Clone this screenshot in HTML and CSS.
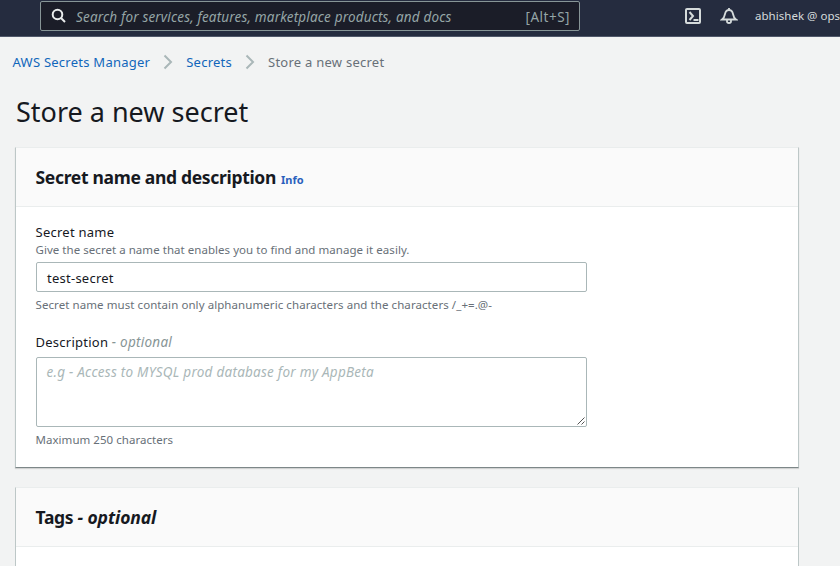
FILE: index.html
```html
<!DOCTYPE html>
<html lang="en"><head><meta charset="utf-8"><title>Store a new secret</title><link rel="stylesheet" href="styles.css"></head>
<body>
<header class="topbar">
<div class="search"><svg class="search-icon" width="16" height="16" viewBox="0 0 16 16"><circle cx="6.5" cy="6.5" r="4.8"/><path d="M10 10l4 4"/></svg><span class="hint">Search for services, features, marketplace products, and docs</span><span class="key">[Alt+S]</span></div>
<svg class="shell" width="18" height="18" viewBox="0 0 18 18"><rect x="2" y="2" width="14" height="14" rx="1"/><path d="M5.500 5l3.500 4-3.500 4M9.500 13h5"/></svg>
<svg class="bell" width="18" height="18" viewBox="0 0 18 18"><path d="M9 1v2M2 12.500c2-1.500 2.500-2.500 3-5.500C5.500 4.500 7 3 9 3s3.500 1.500 4 4c.5 3 1 4 3 5.500zM7 13.500v1a2 1.500 0 0 0 4 0v-1"/></svg>
<span class="user">abhishek @ ops</span>
</header>
<nav class="crumbs"><a>AWS Secrets Manager</a><svg width="10" height="16" viewBox="0 0 10 16"><path d="M1.500 1.500L8 8l-6.500 6.500"/></svg><a>Secrets</a><svg width="10" height="16" viewBox="0 0 10 16"><path d="M1.500 1.500L8 8l-6.500 6.500"/></svg><span>Store a new secret</span></nav>
<main>
<h1>Store a new secret</h1>
<section class="card main-card">
<div class="card-head"><h2>Secret name and description</h2><a class="info">Info</a></div>
<div class="body">
<div class="label">Secret name</div>
<div class="help">Give the secret a name that enables you to find and manage it easily.</div>
<div class="field">test-secret</div>
<div class="help below rule">Secret name must contain only alphanumeric characters and the characters /_+=.@-</div>
<div class="label second">Description <i>- optional</i></div>
<div class="field area">e.g - Access to MYSQL prod database for my AppBeta<svg width="8" height="8" viewBox="0 0 8 8"><path d="M.5 7.500l7-7M4.500 7.500l3-3"/></svg></div>
<div class="help below">Maximum 250 characters</div>
</div></section>
<section class="card tags"><div class="card-head"><h2>Tags <i>- optional</i></h2></div></section>
</main>
</body></html>
```
FILE: styles.css
```css
*{box-sizing:border-box}
body{margin:0;height:566px;overflow:hidden;background:#f2f3f3;font:13px/20px "Noto Sans",sans-serif;color:#16191f;letter-spacing:.25px;display:flex;flex-direction:column}
svg{fill:none;stroke:currentColor;flex:none}
.topbar{height:37px;flex:none;background:#252c3f;border-bottom:1px solid #50586a;display:flex;align-items:flex-start;color:#d5dbdb;white-space:nowrap}
.search{margin:1px 0 0 40px;width:540px;height:30px;border:1px solid #879596;border-radius:2px;background:#1b1d28;display:flex;align-items:center;padding:2px 9px 0 10px;color:#95a5a6;flex:none}
.search-icon{color:#eaeded;stroke-width:2;margin-top:-2px}
.hint{font-style:italic;margin-left:9px;flex:1;font-size:13.5px;letter-spacing:.17px}
.key{font-size:13.5px;letter-spacing:.5px}
.shell{margin:7px 0 0 104px;stroke-width:2}
.bell{margin:7px 0 0 18px;stroke-width:1.8}
.user{margin:6px 0 0 17px;font-size:11.5px;letter-spacing:.03px}
.crumbs{display:flex;flex:none;align-items:center;height:50px;padding-left:12.500px}
.crumbs a{color:#1166bb}
.crumbs svg{margin:0 13px;color:#aab7b8;stroke-width:2}
.crumbs span{color:#687078}
main{padding:0 41px 0 15px;flex:1;min-height:0;display:flex;flex-direction:column}
h1{font-weight:400;font-size:27px;line-height:36px;margin:7px 0 17px 1px;letter-spacing:0}
.card{background:#fff;border:1px solid #bdc7c7;border-top-color:#eaeded;flex:none}
.main-card{height:321px;border-bottom-color:#7d8788;box-shadow:0 1px 1px #0002;margin-bottom:19px}
.tags{flex:1;border-bottom:0}
.card-head{height:59px;background:#fafafa;border-bottom:1px solid #eaeded;padding:0 20px 0 19.5px;display:flex;align-items:center}
h2{font-size:17.5px;line-height:22px;margin:0;font-weight:700;letter-spacing:-.32px}
h2 i{letter-spacing:-.1px}
.info{font-size:11px;font-weight:700;color:#2961bd;margin:5px 0 0 5px;letter-spacing:0}
.body{padding:15px 20px 0 19.500px}
.label{line-height:20px}
.label i{color:#879596;font-size:13.5px;letter-spacing:.25px}
.help{font-size:11.500px;line-height:16px;color:#687078;letter-spacing:.04px}
.rule{letter-spacing:.075px}
.field{width:551px;height:30px;border:1px solid #aab7b8;border-radius:2px;margin:4px 0 0 .5px;padding:5px 10px;position:relative}
.below{margin-top:5px}
.second{margin-top:19px}
.area{height:70px;margin-top:5px;padding:4px 9.5px;color:#aab7b8;font-style:italic;font-size:13.5px;letter-spacing:.25px}
.area svg{position:absolute;right:1px;bottom:1px;color:#555}
```
